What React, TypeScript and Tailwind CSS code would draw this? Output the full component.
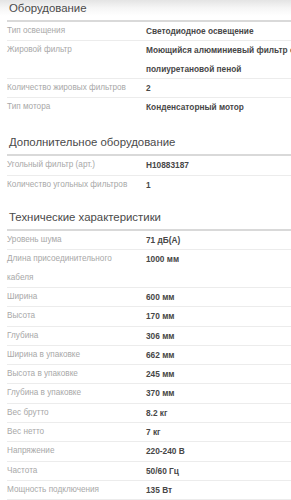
import React from "react";

type Row = { label: string; value: string };

const sections: { title: string; rows: Row[]; lastBorder?: boolean; mt: string }[] = [
  {
    title: "Оборудование",
    mt: "",
    rows: [
      { label: "Тип освещения", value: "Светодиодное освещение" },
      { label: "Жировой фильтр", value: "Моющийся алюминиевый фильтр с полиуретановой пеной" },
      { label: "Количество жировых фильтров", value: "2" },
      { label: "Тип мотора", value: "Конденсаторный мотор" },
    ],
  },
  {
    title: "Дополнительное оборудование",
    mt: "mt-[17px]",
    rows: [
      { label: "Угольный фильтр (арт.)", value: "H10883187" },
      { label: "Количество угольных фильтров", value: "1" },
    ],
  },
  {
    title: "Технические характеристики",
    mt: "mt-[14px]",
    lastBorder: true,
    rows: [
      { label: "Уровень шума", value: "71 дБ(A)" },
      { label: "Длина присоединительного кабеля", value: "1000 мм" },
      { label: "Ширина", value: "600 мм" },
      { label: "Высота", value: "170 мм" },
      { label: "Глубина", value: "306 мм" },
      { label: "Ширина в упаковке", value: "662 мм" },
      { label: "Высота в упаковке", value: "245 мм" },
      { label: "Глубина в упаковке", value: "370 мм" },
      { label: "Вес брутто", value: "8.2 кг" },
      { label: "Вес нетто", value: "7 кг" },
      { label: "Напряжение", value: "220-240 В" },
      { label: "Частота", value: "50/60 Гц" },
      { label: "Мощность подключения", value: "135 Вт" },
    ],
  },
];

export default function App() {
  return (
    <div className="w-[291px] h-[500px] overflow-hidden bg-[linear-gradient(to_bottom,#e4e4e4_0px,#f6f6f6_8px,#ffffff_16px)] font-['Liberation_Sans',Arial,sans-serif]">
      <div className="w-[330px] pl-[7px]">
        {sections.map((s) => (
          <div key={s.title} className={s.mt}>
            <div className="text-[11.4px] leading-[16px] pb-[4px] pl-[2px] text-[#4a4a4a] border-b-2 border-[#d9d9d9] whitespace-nowrap">
              {s.title}
            </div>
            {s.rows.map((r, ri) => {
              const last = ri === s.rows.length - 1;
              return (
                <div
                  key={r.label}
                  className={
                    "flex leading-[18.3px] border-b " +
                    (last && !s.lastBorder ? "border-transparent" : "border-[#ececec]")
                  }
                >
                  <div className="w-[139px] shrink-0 pr-[6px] text-[8.2px] text-[#a8a8a8]">{r.label}</div>
                  <div className="w-[170px] shrink-0 text-[8.3px] font-bold text-[#474747]">{r.value}</div>
                </div>
              );
            })}
          </div>
        ))}
      </div>
    </div>
  );
}
